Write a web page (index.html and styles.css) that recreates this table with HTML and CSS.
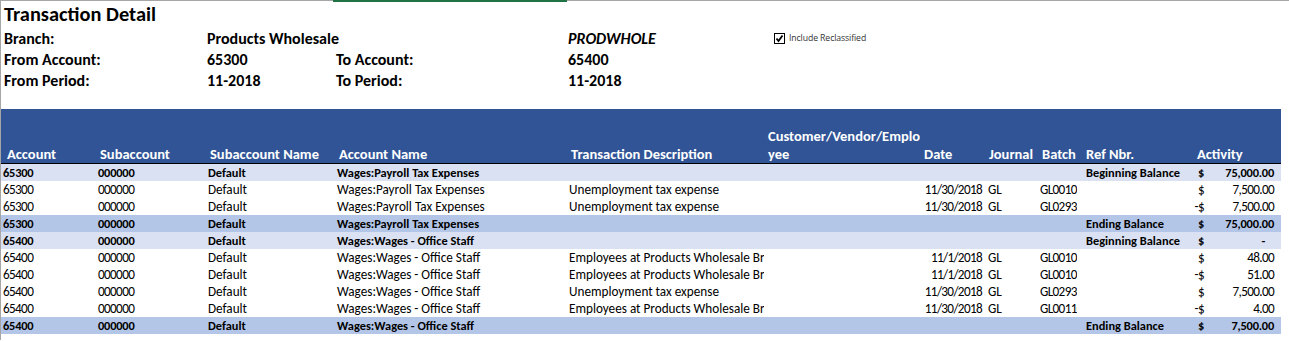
FILE: index.html
```html
<!DOCTYPE html>
<html>
<head>
<meta charset="utf-8">
<link rel="stylesheet" href="styles.css">
</head>
<body>
<div class="sheet">
  <div class="sel-mark"></div>
  <div class="title">Transaction Detail</div>
  <div class="params">
    <div class="lbl">Branch:</div><div class="val">Products Wholesale</div><div class="lbl2"></div><div class="val code">PRODWHOLE</div>
    <div class="chk"><span class="box"><svg width="9" height="9" viewBox="0 0 9 9"><path d="M1.5 4.5 L3.5 7 L7.5 1.5" fill="none" stroke="#000" stroke-width="1.8"/></svg></span><span class="chk-lbl">Include Reclassified</span></div>
    <div class="lbl">From Account:</div><div class="val">65300</div><div class="lbl2">To Account:</div><div class="val">65400</div><div></div>
    <div class="lbl">From Period:</div><div class="val">11-2018</div><div class="lbl2">To Period:</div><div class="val">11-2018</div><div></div>
  </div>
  <table class="grid">
    <colgroup>
      <col class="c-acct"><col class="c-sub"><col class="c-subn"><col class="c-acn"><col class="c-desc"><col class="c-cust"><col class="c-date"><col class="c-jrn"><col class="c-bat"><col class="c-ref"><col class="c-act">
    </colgroup>
    <thead>
      <tr>
        <th>Account</th><th>Subaccount</th><th>Subaccount Name</th><th>Account Name</th><th>Transaction Description</th><th class="wrap">Customer/Vendor/Emplo<br>yee</th><th>Date</th><th>Journal</th><th>Batch</th><th class="ref">Ref Nbr.</th><th>Activity</th>
      </tr>
    </thead>
    <tbody>
      <tr class="beg"><td>65300</td><td>000000</td><td>Default</td><td>Wages:Payroll Tax Expenses</td><td></td><td></td><td></td><td></td><td></td><td class="ref">Beginning Balance</td><td><div class="amt"><span class="sgn">$</span><span class="num">75,000.00</span></div></td></tr>
      <tr><td>65300</td><td>000000</td><td>Default</td><td>Wages:Payroll Tax Expenses</td><td>Unemployment tax expense</td><td></td><td class="date">11/30/2018</td><td>GL</td><td><div class="clip">GL001045</div></td><td class="ref"></td><td><div class="amt"><span class="sgn">$</span><span class="num">7,500.00</span></div></td></tr>
      <tr><td>65300</td><td>000000</td><td>Default</td><td>Wages:Payroll Tax Expenses</td><td>Unemployment tax expense</td><td></td><td class="date">11/30/2018</td><td>GL</td><td><div class="clip">GL029301</div></td><td class="ref"></td><td><div class="amt"><span class="sgn">-$</span><span class="num">7,500.00</span></div></td></tr>
      <tr class="end"><td>65300</td><td>000000</td><td>Default</td><td>Wages:Payroll Tax Expenses</td><td></td><td></td><td></td><td></td><td></td><td class="ref">Ending Balance</td><td><div class="amt"><span class="sgn">$</span><span class="num">75,000.00</span></div></td></tr>
      <tr class="beg"><td>65400</td><td>000000</td><td>Default</td><td>Wages:Wages - Office Staff</td><td></td><td></td><td></td><td></td><td></td><td class="ref">Beginning Balance</td><td><div class="amt"><span class="sgn">$</span><span class="num dash">-</span></div></td></tr>
      <tr><td>65400</td><td>000000</td><td>Default</td><td>Wages:Wages - Office Staff</td><td>Employees at Products Wholesale Branch</td><td></td><td class="date">11/1/2018</td><td>GL</td><td><div class="clip">GL001046</div></td><td class="ref"></td><td><div class="amt"><span class="sgn">$</span><span class="num">48.00</span></div></td></tr>
      <tr><td>65400</td><td>000000</td><td>Default</td><td>Wages:Wages - Office Staff</td><td>Employees at Products Wholesale Branch</td><td></td><td class="date">11/1/2018</td><td>GL</td><td><div class="clip">GL001047</div></td><td class="ref"></td><td><div class="amt"><span class="sgn">-$</span><span class="num">51.00</span></div></td></tr>
      <tr><td>65400</td><td>000000</td><td>Default</td><td>Wages:Wages - Office Staff</td><td>Unemployment tax expense</td><td></td><td class="date">11/30/2018</td><td>GL</td><td><div class="clip">GL029301</div></td><td class="ref"></td><td><div class="amt"><span class="sgn">$</span><span class="num">7,500.00</span></div></td></tr>
      <tr><td>65400</td><td>000000</td><td>Default</td><td>Wages:Wages - Office Staff</td><td>Employees at Products Wholesale Branch</td><td></td><td class="date">11/30/2018</td><td>GL</td><td><div class="clip">GL001101</div></td><td class="ref"></td><td><div class="amt"><span class="sgn">-$</span><span class="num">4.00</span></div></td></tr>
      <tr class="end"><td>65400</td><td>000000</td><td>Default</td><td>Wages:Wages - Office Staff</td><td></td><td></td><td></td><td></td><td></td><td class="ref">Ending Balance</td><td><div class="amt"><span class="sgn">$</span><span class="num">7,500.00</span></div></td></tr>
    </tbody>
  </table>
</div>
</body>
</html>
```

FILE: styles.css
```css
html, body {
  margin: 0;
  padding: 0;
  background: #fff;
}
body {
  font-family: Carlito, Lato, "Liberation Sans", sans-serif;
  color: #000;
  width: 1289px;
  height: 341px;
  overflow: hidden;
}
.sheet {
  position: relative;
  border-top: 1px solid #a6a6a6;
  border-left: 1px solid #a6a6a6;
  height: 340px;
  box-sizing: border-box;
}
.sel-mark {
  position: absolute;
  top: -1px;
  left: 332px;
  width: 234px;
  height: 2px;
  background: #217346;
}
.title {
  font-weight: bold;
  font-size: 20.4px;
  line-height: 27px;
  height: 27px;
  padding-left: 3px;
}
.params {
  display: grid;
  grid-template-columns: 203px 129px 232px 205px 1fr;
  grid-auto-rows: 21px;
  padding-left: 3px;
  font-weight: bold;
  font-size: 16px;
  line-height: 21px;
  margin-bottom: 18px;
  white-space: nowrap;
}
.code {
  font-style: italic;
}
.chk {
  display: flex;
  align-items: center;
  gap: 4px;
  font-weight: normal;
  padding-left: 1px;
}
.box {
  width: 9px;
  height: 9px;
  border: 1px solid #000;
  display: flex;
  align-items: center;
  justify-content: center;
}
.chk-lbl {
  font-family: "Open Sans", "DejaVu Sans", sans-serif;
  font-size: 8.7px;
  color: #333;
  letter-spacing: -0.1px;
}
.grid {
  border-collapse: collapse;
  table-layout: fixed;
  width: 1280px;
  font-size: 13.2px;
}
.c-acct { width: 95px; }
.c-sub { width: 110px; }
.c-subn { width: 129px; }
.c-acn { width: 232px; }
.c-desc { width: 197px; }
.c-cust { width: 156px; }
.c-date { width: 65px; }
.c-jrn { width: 53px; }
.c-bat { width: 39px; }
.c-ref { width: 116px; }
.c-act { width: 88px; }
.grid th {
  background: #305496;
  color: #fff;
  font-weight: bold;
  font-size: 14.5px;
  text-align: left;
  vertical-align: bottom;
  height: 54px;
  padding: 0 0 0 4px;
  line-height: 18px;
  border-bottom: 1px solid #000;
  white-space: nowrap;
  overflow: hidden;
  box-sizing: border-box;
}
.grid th:first-child {
  padding-left: 6px;
}
.grid th.ref {
  padding-left: 9px;
}
.grid td {
  height: 17px;
  padding: 0 0 0 2px;
  line-height: 17px;
  white-space: nowrap;
  overflow: hidden;
  box-sizing: border-box;
}
.grid td:nth-child(1),
.grid td:nth-child(2),
.grid td:nth-child(7),
.grid td:nth-child(9),
.grid td:nth-child(11) {
  letter-spacing: -0.65px;
}
.grid td.ref {
  padding-left: 9px;
}
.grid td.date {
  text-align: right;
  padding-right: 3px;
}
.grid td:nth-child(8) {
  padding-left: 3px;
}
.clip {
  width: 37px;
  overflow: hidden;
}
.grid tr.beg td {
  background: #d9e1f2;
  font-weight: bold;
  font-size: 12.4px;
}
.grid tr.end td {
  background: #b4c6e7;
  font-weight: bold;
  font-size: 12.4px;
}
.grid tr.beg td:nth-child(-n+2),
.grid tr.end td:nth-child(-n+2),
.grid tr.beg td:last-child,
.grid tr.end td:last-child {
  letter-spacing: -0.2px;
}
.grid td:last-child {
  padding: 0;
}
.amt {
  display: flex;
  padding-right: 7px;
}
.sgn {
  width: 11px;
  text-align: right;
}
.num {
  flex: 1;
  text-align: right;
}
.num.dash {
  padding-right: 9px;
}
```
